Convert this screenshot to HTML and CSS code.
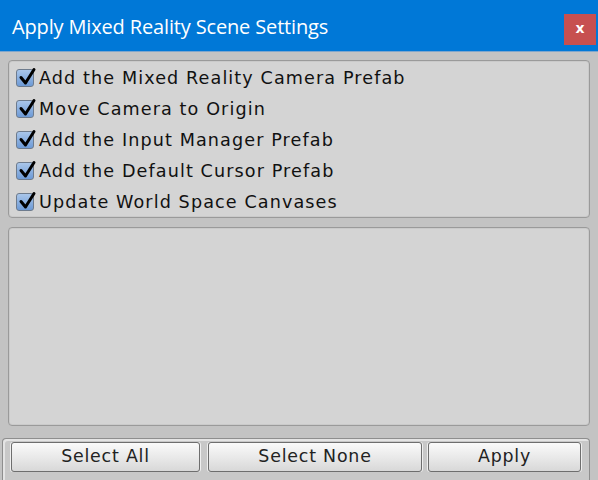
FILE: index.html
```html
<!DOCTYPE html>
<html>
<head>
<meta charset="utf-8">
<link rel="stylesheet" href="styles.css">
</head>
<body>
<div class="window">
  <div class="titlebar">
    <span class="title">Apply Mixed Reality Scene Settings</span>
    <span class="close">x</span>
  </div>
  <div class="content">
    <div class="panel options">
      <label class="row"><span class="box"><svg viewBox="0 0 20 20" width="20" height="20"><path d="M4 10.5 L8.5 16 L17 2.5" fill="none" stroke="#000" stroke-width="3" stroke-linecap="round" stroke-linejoin="round"/></svg></span>Add the Mixed Reality Camera Prefab</label>
      <label class="row"><span class="box"><svg viewBox="0 0 20 20" width="20" height="20"><path d="M4 10.5 L8.5 16 L17 2.5" fill="none" stroke="#000" stroke-width="3" stroke-linecap="round" stroke-linejoin="round"/></svg></span>Move Camera to Origin</label>
      <label class="row"><span class="box"><svg viewBox="0 0 20 20" width="20" height="20"><path d="M4 10.5 L8.5 16 L17 2.5" fill="none" stroke="#000" stroke-width="3" stroke-linecap="round" stroke-linejoin="round"/></svg></span>Add the Input Manager Prefab</label>
      <label class="row"><span class="box"><svg viewBox="0 0 20 20" width="20" height="20"><path d="M4 10.5 L8.5 16 L17 2.5" fill="none" stroke="#000" stroke-width="3" stroke-linecap="round" stroke-linejoin="round"/></svg></span>Add the Default Cursor Prefab</label>
      <label class="row"><span class="box"><svg viewBox="0 0 20 20" width="20" height="20"><path d="M4 10.5 L8.5 16 L17 2.5" fill="none" stroke="#000" stroke-width="3" stroke-linecap="round" stroke-linejoin="round"/></svg></span>Update World Space Canvases</label>
    </div>
    <div class="panel info"></div>
  </div>
  <div class="footer">
    <button class="btn b1">Select All</button>
    <button class="btn b2">Select None</button>
    <button class="btn b3">Apply</button>
  </div>
</div>
</body>
</html>
```

FILE: styles.css
```css
html, body {
  margin: 0;
  padding: 0;
  width: 598px;
  height: 480px;
  overflow: hidden;
  background: #c3c3c3;
}
.window {
  display: flex;
  flex-direction: column;
  width: 598px;
  height: 480px;
}
.titlebar {
  height: 52px;
  background: #0078d7;
  border-bottom: 1px solid #7fa6cc;
  display: flex;
  align-items: center;
  justify-content: space-between;
  padding: 0 2px 0 12px;
  box-sizing: border-box;
  flex: none;
}
.title {
  font-family: "Open Sans", "Noto Sans", sans-serif;
  font-size: 20px;
  color: #ffffff;
  margin-top: 2px;
  letter-spacing: -0.15px;
}
.close {
  width: 32px;
  height: 31px;
  margin-top: 7px;
  background: #c75050;
  color: #fff;
  font-family: "DejaVu Sans", sans-serif;
  font-weight: bold;
  font-size: 14px;
  display: flex;
  align-items: center;
  justify-content: center;
  padding-bottom: 2px;
  box-sizing: border-box;
}
.content {
  display: flex;
  flex-direction: column;
  gap: 9px;
  padding: 8px 8px 0 8px;
  height: 376px;
  box-sizing: border-box;
  flex: none;
}
.panel {
  background: #d4d4d4;
  border: 1px solid #9a9a9a;
  border-radius: 4px;
  box-shadow: inset 0 0 0 1px #cacaca;
}
.options {
  height: 158px;
  box-sizing: border-box;
  padding: 1px 0 0 7px;
  display: flex;
  flex-direction: column;
}
.info {
  height: 199px;
  box-sizing: border-box;
}
.row {
  height: 31px;
  display: flex;
  align-items: center;
  font-family: "DejaVu Sans", sans-serif;
  font-size: 17.6px;
  color: #111;
  letter-spacing: 1.1px;
}
.box {
  position: relative;
  width: 16px;
  height: 16px;
  border: 1px solid #6d7b8d;
  border-radius: 3px;
  background: linear-gradient(#a9c6ea, #6d9ad6);
  margin-right: 5px;
  flex: none;
}
.box svg {
  position: absolute;
  left: 0px;
  top: -3px;
}
.footer {
  margin: 10px 8px 0 2px;
  flex: 1;
  border: 1px solid #8e8e8e;
  border-bottom: none;
  border-radius: 4px 4px 0 0;
  background: #c8c8c8;
  box-shadow: inset 2px 2px 0 #e4e4e4;
  display: flex;
  padding: 3px 0 0 8px;
  box-sizing: border-box;
}
.btn {
  height: 30px;
  border: 1px solid #6e6e6e;
  border-radius: 3px;
  background: linear-gradient(#fafafa, #e6e6e6 60%, #d8d8d8);
  box-shadow: 1px 0 0 #efefef, -1px 0 0 #efefef;
  font-family: "DejaVu Sans", sans-serif;
  font-size: 17.4px;
  letter-spacing: 0.8px;
  color: #222;
  padding: 0 0 2px 0;
  margin: 0;
}
.b1 { width: 189px; }
.b2 { width: 214px; margin-left: 8px; }
.b3 { width: 153px; margin-left: 6px; }
```
